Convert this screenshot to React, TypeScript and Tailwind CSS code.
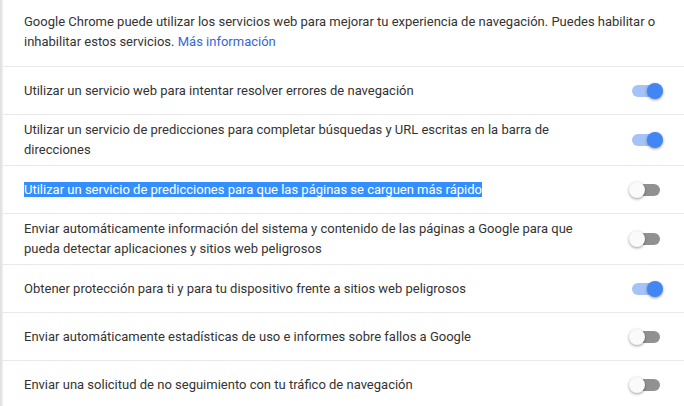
import React from "react";

type Row = { text: React.ReactNode; on: boolean };

function Toggle({ on }: { on: boolean }) {
  return (
    <div className="relative w-[34px] h-4 shrink-0">
      <div
        className={
          "absolute left-[3px] top-[2px] w-[28px] h-3 rounded-full " +
          (on ? "bg-[#a3c3f9]" : "bg-[#919191]")
        }
      />
      <div
        className={
          "absolute top-0 w-4 h-4 rounded-full shadow-[0_1px_3px_rgba(0,0,0,0.4)] " +
          (on ? "left-[18px] bg-[#4285f4]" : "left-0 bg-[#fafafa]")
        }
      />
    </div>
  );
}

export default function App() {
  const rows: Row[] = [
    { text: "Utilizar un servicio web para intentar resolver errores de navegación", on: true },
    {
      text: "Utilizar un servicio de predicciones para completar búsquedas y URL escritas en la barra de direcciones",
      on: true,
    },
    {
      text: (
        <span className="bg-[#338fff] text-white">
          Utilizar un servicio de predicciones para que las páginas se carguen más rápido
        </span>
      ),
      on: false,
    },
    {
      text: "Enviar automáticamente información del sistema y contenido de las páginas a Google para que pueda detectar aplicaciones y sitios web peligrosos",
      on: false,
    },
    { text: "Obtener protección para ti y para tu dispositivo frente a sitios web peligrosos", on: true },
    { text: "Enviar automáticamente estadísticas de uso e informes sobre fallos a Google", on: false },
    { text: "Enviar una solicitud de no seguimiento con tu tráfico de navegación", on: false },
  ];

  return (
    <div
      className="w-[684px] h-[406px] overflow-hidden bg-white flex text-[13px] leading-5 text-[#333333]"
      style={{ fontFamily: "Roboto, 'Liberation Sans', sans-serif" }}
    >
      <div className="w-[3px] shrink-0 bg-linear-to-r from-[#dcdcdc] to-[#f1f1f1]" />
      <div className="flex-1 flex flex-col">
        <div className="pl-[21px] pr-5 pt-3 h-[66px] shrink-0">
          Google Chrome puede utilizar los servicios web para mejorar tu experiencia de navegación. Puedes habilitar o
          inhabilitar estos servicios. <span className="text-[#3367d6]">Más información</span>
        </div>
        {rows.map((r, i) => (
          <div
            key={i}
            className="shrink-0 border-t border-[#e9e9e9] min-h-[48px] py-[5px] pl-[21px] pr-[21px] flex items-center gap-5"
          >
            <div className="flex-1">{r.text}</div>
            <Toggle on={r.on} />
          </div>
        ))}
      </div>
    </div>
  );
}
